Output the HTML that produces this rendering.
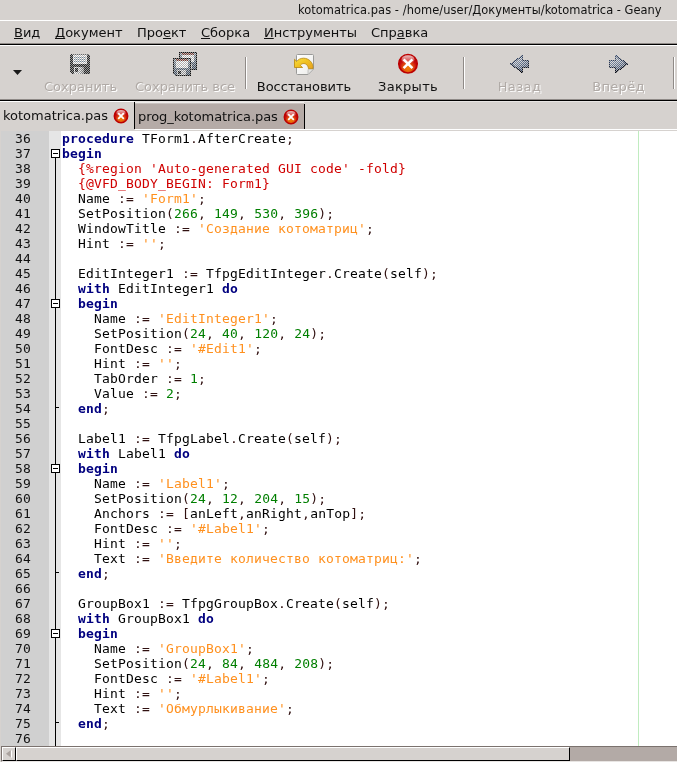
<!DOCTYPE html>
<html lang="ru"><head><meta charset="utf-8"><title>kotomatrica.pas - Geany</title>
<style>
*{box-sizing:border-box;margin:0;padding:0}
html,body{width:677px;height:762px;overflow:hidden}
body{will-change:transform;background:#d6d2cf;font-family:"DejaVu Sans","Liberation Sans",sans-serif;font-size:13px;color:#1a1a1a;position:relative}
.abs{position:absolute}
#title{position:absolute;right:15.5px;top:2px;height:16px;line-height:16px;white-space:nowrap;color:#111;font-size:11.45px}
.hl{position:absolute;left:0;width:677px;height:1px}
#menu span{position:absolute;top:25px;height:16px;line-height:16px;white-space:nowrap;color:#111}
#menu u{text-decoration:underline;text-underline-offset:1px;text-decoration-skip-ink:none;text-decoration-thickness:1px}
.tb{position:absolute;top:79px;height:16px;line-height:16px;white-space:nowrap;transform:translateX(-50%);color:#111}
.tb.dis{color:#b0aaa6;text-shadow:1px 1px 0 #fff}
.sep{position:absolute;top:57px;width:2px;height:32px;border-left:1px solid #8f8a87;border-right:1px solid #fff}
.ico{position:absolute}
#tabs .tab{position:absolute;white-space:nowrap;line-height:16px;color:#111}
#ed{position:absolute;left:0;top:131px;width:677px;height:615px;background:#fff;overflow:hidden}
#ed .m1{position:absolute;left:1px;top:0;width:48px;height:615px;background:#d0d0d0}
#ed .m2{position:absolute;left:49px;top:0;width:12px;height:615px;background:#e6e6e6}
#ed .vl{position:absolute;left:55px;top:22px;width:1px;height:600px;background:#000}
#ed .edge{position:absolute;left:638px;top:0;width:1px;height:615px;background:#c0ecc0}
.ln{position:relative;height:15px;line-height:15px;white-space:pre;font-family:"DejaVu Sans Mono","Liberation Mono",monospace;font-size:13px;color:#000}
.ln b{position:absolute;left:1px;width:30px;text-align:right;font-weight:normal;color:#111;letter-spacing:0.17px}
.ln code{position:absolute;left:62px;font:inherit;letter-spacing:0.174px}
.ln i.fb{position:absolute;left:51px;top:3px;width:9px;height:9px;border:1px solid #000;background:#fff}
.ln i.fb:after{content:"";position:absolute;left:1px;top:3px;width:5px;height:1px;background:#000}
.ln i.fe{position:absolute;left:55px;top:6px;width:4px;height:1px;background:#000}
.k{color:#00007f;font-weight:bold}
.c{color:#d00000}
.s{color:#ff901e}
.n{color:#007f00}
.o{color:#301010}
</style></head><body>
<div id="title"><span style="letter-spacing:.06px">kotomatrica.pas - /home/user/</span>Документы/kotomatrica - Geany</div>
<div class="hl" style="top:20px;background:#fff"></div>
<div id="menu">
<span style="left:14px"><u>В</u>ид</span>
<span style="left:55px"><u>Д</u>окумент</span>
<span style="left:137px">Про<u>е</u>кт</span>
<span style="left:201px"><u>С</u>борка</span>
<span style="left:264px"><u>И</u>нструменты</span>
<span style="left:371px">Спр<u>а</u>вка</span>
</div>
<div class="hl" style="top:43px;background:#8f8a87"></div>
<div class="hl" style="top:44px;background:#000"></div>
<div class="hl" style="top:45px;background:#fff"></div>
<div id="toolbar">
<svg class="ico" style="left:13px;top:70px" width="9" height="5" viewBox="0 0 9 5"><path d="M0 0H9L4.5 5Z" fill="#1a1a1a"/></svg>
<div class="tb dis" style="left:80.5px">Сохранить</div>
<div class="tb dis" style="left:185px">Сохранить все</div>
<div class="sep" style="left:245px"></div>
<div class="tb" style="left:304px">Восстановить</div>
<div class="tb" style="left:408px;letter-spacing:.3px">Закрыть</div>
<div class="sep" style="left:463px"></div>
<div class="tb dis" style="left:519.5px;letter-spacing:.4px">Назад</div>
<div class="tb dis" style="left:618.5px;letter-spacing:.3px">Вперёд</div>
<div class="sep" style="left:673px"></div>
<svg class="ico" style="left:0;top:46px" width="677" height="53" viewBox="0 46 677 53">
<defs>
<pattern id="podd" width="2" height="2" patternUnits="userSpaceOnUse"><rect x="1" y="0" width="1" height="1" fill="#fff"/><rect x="0" y="1" width="1" height="1" fill="#fff"/></pattern>
<pattern id="pevn" width="2" height="2" patternUnits="userSpaceOnUse"><rect x="0" y="0" width="1" height="1" fill="#fff"/><rect x="1" y="1" width="1" height="1" fill="#fff"/></pattern>
<mask id="modd" maskUnits="userSpaceOnUse" x="0" y="46" width="677" height="53"><rect x="0" y="46" width="677" height="53" fill="url(#podd)" shape-rendering="crispEdges"/></mask>
<mask id="mevn" maskUnits="userSpaceOnUse" x="0" y="46" width="677" height="53"><rect x="0" y="46" width="677" height="53" fill="url(#pevn)" shape-rendering="crispEdges"/></mask>
<filter id="fdark" filterUnits="userSpaceOnUse" x="0" y="46" width="677" height="53" color-interpolation-filters="sRGB"><feColorMatrix type="saturate" values="0.8"/><feColorMatrix type="matrix" values="0.7 0 0 0 0  0 0.7 0 0 0  0 0 0.7 0 0  0 0 0 1 0"/></filter>
<filter id="flite" filterUnits="userSpaceOnUse" x="0" y="46" width="677" height="53" color-interpolation-filters="sRGB"><feColorMatrix type="matrix" values="0.15 0.295 0.055 0 0.498  0.15 0.295 0.055 0 0.498  0.15 0.295 0.055 0 0.498  0 0 0 1 0"/></filter>
<radialGradient id="rg" cx="0.5" cy="0.74" r="0.66"><stop offset="0" stop-color="#f08400"/><stop offset="0.4" stop-color="#e25410"/><stop offset="0.72" stop-color="#c80c0c"/><stop offset="1" stop-color="#b40000"/></radialGradient>
<linearGradient id="gl" x1="0" y1="0" x2="0" y2="1"><stop offset="0" stop-color="#fff" stop-opacity="0.75"/><stop offset="1" stop-color="#fff" stop-opacity="0.05"/></linearGradient>
<linearGradient id="ylw" x1="0" y1="0" x2="1" y2="1"><stop offset="0" stop-color="#f8e040"/><stop offset="0.5" stop-color="#f0c020"/><stop offset="1" stop-color="#e8a020"/></linearGradient>
<linearGradient id="doc" x1="0" y1="0" x2="1" y2="1"><stop offset="0" stop-color="#fff"/><stop offset="1" stop-color="#ececea"/></linearGradient>
<linearGradient id="shg" x1="0" y1="0" x2="1" y2="0"><stop offset="0" stop-color="#f4f4f4"/><stop offset="0.6" stop-color="#d8d8d8"/><stop offset="1" stop-color="#8c8c8c"/></linearGradient>
<linearGradient id="fbody" x1="0" y1="0" x2="0" y2="1"><stop offset="0" stop-color="#98b0c8"/><stop offset="1" stop-color="#46648a"/></linearGradient>
<linearGradient id="aout" x1="0" y1="0" x2="0.3" y2="1"><stop offset="0" stop-color="#5a84c8"/><stop offset="0.55" stop-color="#26407a"/><stop offset="1" stop-color="#060c20"/></linearGradient>
<linearGradient id="afil" x1="0" y1="0" x2="0.6" y2="1"><stop offset="0" stop-color="#d0dcf8"/><stop offset="0.5" stop-color="#94b0e0"/><stop offset="1" stop-color="#4668ac"/></linearGradient>
<g id="cls"><circle cx="9" cy="9" r="6.7" fill="url(#rg)" stroke="#bc0000" stroke-width="1.5"/><ellipse cx="9" cy="6" rx="4.6" ry="3" fill="url(#gl)"/><path d="M6.2 6.2L11.8 11.8M11.8 6.2L6.2 11.8" stroke="#fff" stroke-width="1.8"/></g>
<g id="dis" shape-rendering="crispEdges">
<!-- save -->
<path d="M71 54H89V55H90V74H72L70 72V55H71Z" fill="#383838"/>
<rect x="72" y="54" width="16" height="1" fill="#909090"/>
<rect x="73" y="55" width="14" height="9" fill="#fff"/>
<path d="M74 57h12v1h-12zM74 59h12v1h-12zM74 61h12v1h-12z" fill="#9cc0dc"/>
<rect x="74" y="67" width="10" height="7" fill="url(#shg)"/>
<rect x="75" y="68" width="3" height="4" fill="#333"/>
<!-- save all -->
<path d="M179 52H197V70H181L179 68Z" fill="#141414"/>
<rect x="180" y="53" width="16" height="16" fill="url(#fbody)"/>
<rect x="182" y="53" width="12" height="9" fill="#fcfcfc"/>
<rect x="182" y="53" width="12" height="2" fill="#c8503c"/>
<rect x="183" y="64" width="9" height="5" fill="#d4d4d4"/>
<rect x="184" y="65" width="3" height="3" fill="#2a2a2a"/>
<path d="M173 58H191V76H175L173 74Z" fill="#141414"/>
<rect x="174" y="59" width="16" height="16" fill="url(#fbody)"/>
<rect x="176" y="59" width="12" height="9" fill="#fcfcfc"/>
<rect x="176" y="59" width="12" height="2" fill="#c8503c"/>
<rect x="177" y="70" width="9" height="5" fill="#d4d4d4"/>
<rect x="178" y="71" width="3" height="3" fill="#2a2a2a"/>
<!-- back -->
<path d="M509.6 64L522 55H523V60H529V68H523V73H522Z" fill="url(#aout)"/>
<path d="M512 64L522 56.8V61H528V67H522V71.2Z" fill="url(#afil)"/>
<!-- forward -->
<path d="M628.4 64L616 55H615V60H609V68H615V73H616Z" fill="url(#aout)"/>
<path d="M626 64L616 56.8V61H610V67H616V71.2Z" fill="url(#afil)"/>
</g>
</defs>
<use href="#dis" filter="url(#fdark)" mask="url(#modd)"/>
<use href="#dis" filter="url(#flite)" mask="url(#mevn)"/>
<!-- revert -->
<g>
<path d="M297.5 54.5H312.5Q313.5 54.5 313.5 55.5V69L308 74.5H297.5Q296.5 74.5 296.5 73.5V55.5Q296.5 54.5 297.5 54.5Z" fill="url(#doc)" stroke="#9a9a98" stroke-width="1"/>
<path d="M308 74.5V70Q308 69 309 69H313.5Z" fill="#e4e4e2" stroke="#aaa" stroke-width="0.6"/>
<path d="M294.5 59.3L294.5 67.5L302.6 67.5L300.4 65.4C301.2 63.6 304.6 62.6 306.8 64.8C307.9 66 308.4 67.5 308.4 68.6L313 68.6C313.6 62.5 308.6 58.2 303.6 58.2C300.4 58.2 298 59.6 296.8 61.4Z" fill="url(#ylw)" stroke="#b8860b" stroke-width="0.8" stroke-linejoin="round"/>
</g>
<!-- close -->
<g>
<circle cx="408" cy="63.8" r="9.2" fill="url(#rg)" stroke="#bc0000" stroke-width="1.7"/>
<ellipse cx="408" cy="59.5" rx="6.5" ry="4.2" fill="url(#gl)"/>
<path d="M403.6 59.4L412.4 68.2M412.4 59.4L403.6 68.2" stroke="#fff" stroke-width="2.6" stroke-linecap="butt"/>
</g>
</svg>

</div>
<div class="hl" style="top:99px;background:#8f8a87"></div>
<div class="hl" style="top:100px;background:#000"></div>
<div class="hl" style="top:101px;background:#e8e5e3"></div>
<div class="abs" style="left:0;top:101px;width:134px;height:1px;background:#fff"></div>
<div id="tabs">
<div class="abs" style="left:135px;top:102px;width:169px;height:2px;background:#c9c2bf;border-top:1px solid #efedeb"></div>
<div class="abs" style="left:135px;top:104px;width:170px;height:25px;background:#b5aba7;border-right:1px solid #000"></div>
<div class="abs" style="left:134px;top:102px;width:1px;height:27px;background:#000"></div>
<div class="abs" style="left:135px;top:129px;width:542px;height:1px;background:#fff"></div>
<div class="tab" style="left:3px;top:108px">kotomatrica.pas</div>
<div class="tab" style="left:138px;top:109px;letter-spacing:-.06px">prog_kotomatrica.pas</div>
<svg class="ico" style="left:112px;top:107px" width="18" height="18" viewBox="0 0 18 18"><use href="#cls"/></svg>
<svg class="ico" style="left:282px;top:108px" width="18" height="18" viewBox="0 0 18 18"><use href="#cls"/></svg>
</div>
<div id="ed"><div class="abs" style="left:0;top:0;width:1px;height:615px;background:#d6d2cf"></div><div class="m1"></div><div class="m2"></div><div class="vl"></div><div class="edge"></div>
<div class="ln"><b>36</b><code><span class="k">procedure</span> TForm1<span class="o">.</span>AfterCreate<span class="o">;</span></code></div>
<div class="ln"><b>37</b><i class="fb"></i><code><span class="k">begin</span></code></div>
<div class="ln"><b>38</b><code>  <span class="c">{%region 'Auto-generated GUI code' -fold}</span></code></div>
<div class="ln"><b>39</b><code>  <span class="c">{@VFD_BODY_BEGIN: Form1}</span></code></div>
<div class="ln"><b>40</b><code>  Name <span class="o">:=</span> <span class="s">'Form1'</span><span class="o">;</span></code></div>
<div class="ln"><b>41</b><code>  SetPosition<span class="o">(</span><span class="n">266</span><span class="o">,</span> <span class="n">149</span><span class="o">,</span> <span class="n">530</span><span class="o">,</span> <span class="n">396</span><span class="o">);</span></code></div>
<div class="ln"><b>42</b><code>  WindowTitle <span class="o">:=</span> <span class="s">'Создание котоматриц'</span><span class="o">;</span></code></div>
<div class="ln"><b>43</b><code>  Hint <span class="o">:=</span> <span class="s">''</span><span class="o">;</span></code></div>
<div class="ln"><b>44</b><code></code></div>
<div class="ln"><b>45</b><code>  EditInteger1 <span class="o">:=</span> TfpgEditInteger<span class="o">.</span>Create<span class="o">(</span>self<span class="o">);</span></code></div>
<div class="ln"><b>46</b><code>  <span class="k">with</span> EditInteger1 <span class="k">do</span></code></div>
<div class="ln"><b>47</b><i class="fb"></i><code>  <span class="k">begin</span></code></div>
<div class="ln"><b>48</b><code>    Name <span class="o">:=</span> <span class="s">'EditInteger1'</span><span class="o">;</span></code></div>
<div class="ln"><b>49</b><code>    SetPosition<span class="o">(</span><span class="n">24</span><span class="o">,</span> <span class="n">40</span><span class="o">,</span> <span class="n">120</span><span class="o">,</span> <span class="n">24</span><span class="o">);</span></code></div>
<div class="ln"><b>50</b><code>    FontDesc <span class="o">:=</span> <span class="s">'#Edit1'</span><span class="o">;</span></code></div>
<div class="ln"><b>51</b><code>    Hint <span class="o">:=</span> <span class="s">''</span><span class="o">;</span></code></div>
<div class="ln"><b>52</b><code>    TabOrder <span class="o">:=</span> <span class="n">1</span><span class="o">;</span></code></div>
<div class="ln"><b>53</b><code>    Value <span class="o">:=</span> <span class="n">2</span><span class="o">;</span></code></div>
<div class="ln"><b>54</b><i class="fe"></i><code>  <span class="k">end</span><span class="o">;</span></code></div>
<div class="ln"><b>55</b><code></code></div>
<div class="ln"><b>56</b><code>  Label1 <span class="o">:=</span> TfpgLabel<span class="o">.</span>Create<span class="o">(</span>self<span class="o">);</span></code></div>
<div class="ln"><b>57</b><code>  <span class="k">with</span> Label1 <span class="k">do</span></code></div>
<div class="ln"><b>58</b><i class="fb"></i><code>  <span class="k">begin</span></code></div>
<div class="ln"><b>59</b><code>    Name <span class="o">:=</span> <span class="s">'Label1'</span><span class="o">;</span></code></div>
<div class="ln"><b>60</b><code>    SetPosition<span class="o">(</span><span class="n">24</span><span class="o">,</span> <span class="n">12</span><span class="o">,</span> <span class="n">204</span><span class="o">,</span> <span class="n">15</span><span class="o">);</span></code></div>
<div class="ln"><b>61</b><code>    Anchors <span class="o">:=</span> <span class="o">[</span>anLeft<span class="o">,</span>anRight<span class="o">,</span>anTop<span class="o">];</span></code></div>
<div class="ln"><b>62</b><code>    FontDesc <span class="o">:=</span> <span class="s">'#Label1'</span><span class="o">;</span></code></div>
<div class="ln"><b>63</b><code>    Hint <span class="o">:=</span> <span class="s">''</span><span class="o">;</span></code></div>
<div class="ln"><b>64</b><code>    Text <span class="o">:=</span> <span class="s">'Введите количество котоматриц:'</span><span class="o">;</span></code></div>
<div class="ln"><b>65</b><i class="fe"></i><code>  <span class="k">end</span><span class="o">;</span></code></div>
<div class="ln"><b>66</b><code></code></div>
<div class="ln"><b>67</b><code>  GroupBox1 <span class="o">:=</span> TfpgGroupBox<span class="o">.</span>Create<span class="o">(</span>self<span class="o">);</span></code></div>
<div class="ln"><b>68</b><code>  <span class="k">with</span> GroupBox1 <span class="k">do</span></code></div>
<div class="ln"><b>69</b><i class="fb"></i><code>  <span class="k">begin</span></code></div>
<div class="ln"><b>70</b><code>    Name <span class="o">:=</span> <span class="s">'GroupBox1'</span><span class="o">;</span></code></div>
<div class="ln"><b>71</b><code>    SetPosition<span class="o">(</span><span class="n">24</span><span class="o">,</span> <span class="n">84</span><span class="o">,</span> <span class="n">484</span><span class="o">,</span> <span class="n">208</span><span class="o">);</span></code></div>
<div class="ln"><b>72</b><code>    FontDesc <span class="o">:=</span> <span class="s">'#Label1'</span><span class="o">;</span></code></div>
<div class="ln"><b>73</b><code>    Hint <span class="o">:=</span> <span class="s">''</span><span class="o">;</span></code></div>
<div class="ln"><b>74</b><code>    Text <span class="o">:=</span> <span class="s">'Обмурлыкивание'</span><span class="o">;</span></code></div>
<div class="ln"><b>75</b><i class="fe"></i><code>  <span class="k">end</span><span class="o">;</span></code></div>
<div class="ln"><b>76</b><code></code></div>
</div>
<div id="hsb">
<div class="abs" style="left:1px;top:746px;width:676px;height:16px;background:#b3aaa6;border-top:1px solid #7b726e;border-left:1px solid #7b726e;border-bottom:1px solid #e8e5e3"></div>
<div class="abs" style="left:2px;top:747px;width:14px;height:14px;background:#d6d2cf;border-right:1px solid #000;border-bottom:1px solid #000;border-top:1px solid #fff;border-left:1px solid #fff"></div>
<div class="abs" style="left:16px;top:747px;width:554px;height:14px;background:#d6d2cf;border-right:1px solid #000;border-bottom:1px solid #000;border-top:1px solid #fff;border-left:1px solid #fff"></div>
<svg class="ico" style="left:6px;top:750px" width="6" height="8" viewBox="0 0 6 8"><path d="M5.5 0.5V7.5" stroke="#fff" stroke-width="1"/><path d="M4.6 0.2V7.2L0 3.7Z" fill="#aaa29e"/></svg>
</div>
</body></html>
